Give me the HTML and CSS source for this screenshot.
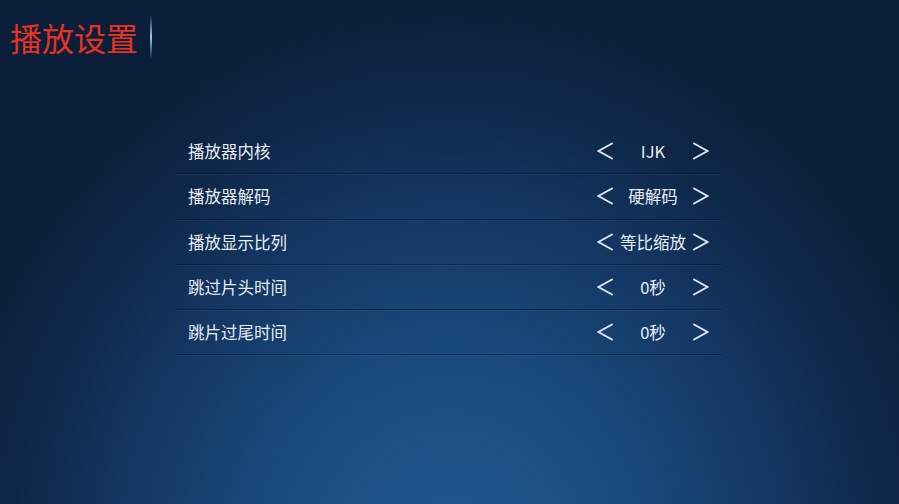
FILE: index.html
```html
<!DOCTYPE html>
<html lang="zh-CN">
<head>
<meta charset="utf-8">
<title>播放设置</title>
<link rel="stylesheet" href="styles.css">
</head>
<body>
<div class="screen">
  <header class="header">
    <h1 class="title">播放设置</h1>
    <span class="title-bar"></span>
  </header>
  <main class="list">
    <div class="row">
      <span class="label">播放器内核</span>
      <div class="control">
        <svg class="chev" viewBox="0 0 16 18"><polyline points="15,1.5 1.5,9 15,16.5"/></svg>
        <span class="value">IJK</span>
        <svg class="chev" viewBox="0 0 16 18"><polyline points="1,1.5 14.5,9 1,16.5"/></svg>
      </div>
    </div>
    <div class="row">
      <span class="label">播放器解码</span>
      <div class="control">
        <svg class="chev" viewBox="0 0 16 18"><polyline points="15,1.5 1.5,9 15,16.5"/></svg>
        <span class="value">硬解码</span>
        <svg class="chev" viewBox="0 0 16 18"><polyline points="1,1.5 14.5,9 1,16.5"/></svg>
      </div>
    </div>
    <div class="row">
      <span class="label">播放显示比列</span>
      <div class="control">
        <svg class="chev" viewBox="0 0 16 18"><polyline points="15,1.5 1.5,9 15,16.5"/></svg>
        <span class="value">等比缩放</span>
        <svg class="chev" viewBox="0 0 16 18"><polyline points="1,1.5 14.5,9 1,16.5"/></svg>
      </div>
    </div>
    <div class="row">
      <span class="label">跳过片头时间</span>
      <div class="control">
        <svg class="chev" viewBox="0 0 16 18"><polyline points="15,1.5 1.5,9 15,16.5"/></svg>
        <span class="value">0秒</span>
        <svg class="chev" viewBox="0 0 16 18"><polyline points="1,1.5 14.5,9 1,16.5"/></svg>
      </div>
    </div>
    <div class="row">
      <span class="label">跳片过尾时间</span>
      <div class="control">
        <svg class="chev" viewBox="0 0 16 18"><polyline points="15,1.5 1.5,9 15,16.5"/></svg>
        <span class="value">0秒</span>
        <svg class="chev" viewBox="0 0 16 18"><polyline points="1,1.5 14.5,9 1,16.5"/></svg>
      </div>
    </div>
  </main>
</div>
</body>
</html>
```

FILE: styles.css
```css
* { box-sizing: border-box; }
html, body {
  margin: 0;
  padding: 0;
  width: 899px;
  height: 504px;
  overflow: hidden;
}
body {
  font-family: "Noto Sans CJK SC", "Noto Sans", sans-serif;
  color: #e6ecf2;
}
.screen {
  width: 899px;
  height: 504px;
  background:
    radial-gradient(ellipse 520px 560px at 450px 560px, #215a92 0%, #1a4b7e 35%, #133561 65%, #0e2645 85%, #0c1f3a 100%);
  padding-top: 14px;
}
.header {
  display: flex;
  align-items: center;
  gap: 12px;
  padding-left: 10px;
  height: 46px;
}
.title {
  margin: 0;
  font-size: 32px;
  font-weight: 400;
  color: #e63220;
  line-height: 46px;
  letter-spacing: 0;
}
.title-bar {
  width: 2px;
  height: 44px;
  background: linear-gradient(to bottom, rgba(120,180,230,0) 0%, #9cc8ec 50%, rgba(120,180,230,0) 100%);
}
.list {
  margin: 69px 0 0 175px;
  width: 547px;
}
.row {
  height: 45.3px;
  display: flex;
  align-items: center;
  justify-content: space-between;
  padding: 0 13px;
  border-bottom: 1px solid rgba(5, 15, 35, 0.45);
  box-shadow: 0 1px 0 rgba(120, 170, 220, 0.08);
}
.label {
  font-size: 16.5px;
  color: #e8eef4;
}
.control {
  display: flex;
  align-items: center;
}
.value {
  width: 80px;
  text-align: center;
  font-size: 16.5px;
  color: #e8eef4;
}
.chev {
  width: 16px;
  height: 18px;
  fill: none;
  stroke: #dfe6ee;
  stroke-width: 2;
  stroke-linecap: round;
  stroke-linejoin: miter;
}
```
